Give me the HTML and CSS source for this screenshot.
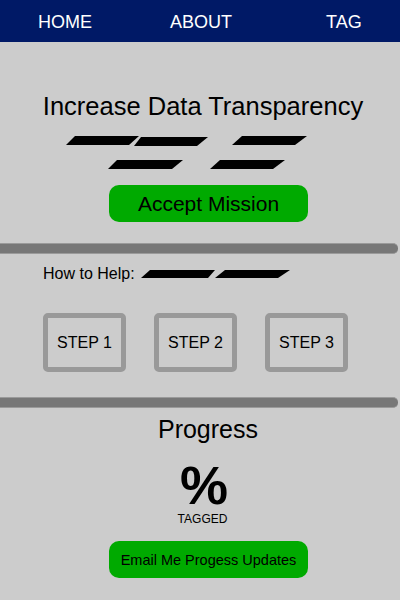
FILE: index.html
```html
<!DOCTYPE html>
<html>
<head>
<meta charset="utf-8">
<link rel="stylesheet" href="styles.css">
</head>
<body>
<nav class="nav">
  <a class="nav-link nav-home">HOME</a>
  <a class="nav-link nav-about">ABOUT</a>
  <a class="nav-link nav-tag">TAG</a>
</nav>
<section class="hero">
  <h1 class="title">Increase Data Transparency</h1>
  <svg class="redacted" width="400" height="33" viewBox="0 0 400 33">
    <polygon points="66,9 75,0 139,0 129,9"/>
    <polygon points="134,10 141,1 208,1 197,10"/>
    <polygon points="232,9 242,0 307,0 295,9"/>
    <polygon points="108,33 117,24 183,24 172,33"/>
    <polygon points="210,33 220,24 285,24 273,33"/>
  </svg>
  <button class="btn btn-accept">Accept Mission</button>
</section>
<div class="divider"></div>
<section class="help">
  <div class="help-row">
    <span class="help-label">How to Help:</span>
    <svg class="help-bars" width="150" height="9" viewBox="0 0 150 9">
      <polygon points="0,8 9,0 74,0 67,8"/>
      <polygon points="74,8 84,0 149,0 137,8"/>
    </svg>
  </div>
  <div class="steps">
    <div class="step">STEP 1</div>
    <div class="step">STEP 2</div>
    <div class="step">STEP 3</div>
  </div>
</section>
<div class="divider divider-2"></div>
<section class="progress">
  <h2 class="progress-title">Progress</h2>
  <div class="percent">%</div>
  <div class="tagged">TAGGED</div>
  <button class="btn btn-email">Email Me Progess Updates</button>
</section>
</body>
</html>
```

FILE: styles.css
```css
* { box-sizing: border-box; }
html, body {
  margin: 0;
  padding: 0;
  background: #cccccc;
  font-family: "Liberation Sans", Arial, sans-serif;
  color: #000;
  width: 400px;
  height: 600px;
  overflow: hidden;
}
.nav {
  display: flex;
  align-items: center;
  height: 42px;
  background: #001966;
  padding-left: 38px;
}
.nav-link {
  color: #fff;
  font-size: 18px;
  line-height: 20px;
  text-decoration: none;
  margin-top: 1px;
}
.nav-about { margin-left: 78px; }
.nav-tag { margin-left: 94px; }

.hero {
  padding-top: 49px;
  display: flex;
  flex-direction: column;
}
.title {
  margin: 0;
  font-weight: normal;
  font-size: 25.5px;
  line-height: 30px;
  text-align: center;
  padding-left: 6px;
}
.redacted {
  display: block;
  margin-top: 15px;
}
.btn {
  display: flex;
  align-items: center;
  justify-content: center;
  width: 199px;
  height: 37px;
  margin-left: 109px;
  background: #00aa00;
  border: none;
  border-radius: 10px;
  font-family: "Liberation Sans", Arial, sans-serif;
  color: #000;
  padding: 0;
}
.btn-accept {
  margin-top: 16px;
  font-size: 21px;
}
.divider {
  margin-top: 21px;
  width: 398px;
  height: 11px;
  background: #777777;
  border-top: 1px solid #9a9a9a;
  border-bottom: 1px solid #9a9a9a;
  border-radius: 0 5px 5px 0;
}
.help {
  padding-top: 10px;
}
.help-row {
  display: flex;
  align-items: flex-start;
  padding-left: 43px;
  height: 20px;
}
.help-label {
  font-size: 16px;
  line-height: 20px;
}
.help-bars {
  display: block;
  margin-top: 6px;
  margin-left: 6px;
}
.steps {
  display: flex;
  padding-left: 43px;
  gap: 28px;
  margin-top: 29px;
}
.step {
  width: 83px;
  height: 59px;
  border: 5px solid #999999;
  border-radius: 5px;
  display: flex;
  align-items: center;
  justify-content: center;
  font-size: 16px;
}
.divider-2 {
  margin-top: 25px;
}
.progress {
  padding-top: 6px;
  display: flex;
  flex-direction: column;
}
.progress-title {
  margin: 0;
  font-weight: normal;
  font-size: 25px;
  line-height: 30px;
  text-align: center;
  padding-left: 16px;
}
.percent {
  margin-top: 21px;
  font-size: 54px;
  font-weight: bold;
  line-height: 40px;
  text-align: center;
  padding-left: 8px;
}
.tagged {
  margin-top: 7px;
  font-size: 12px;
  line-height: 14px;
  text-align: center;
  padding-left: 5px;
}
.btn-email {
  margin-top: 15px;
  font-size: 14.5px;
}
```
